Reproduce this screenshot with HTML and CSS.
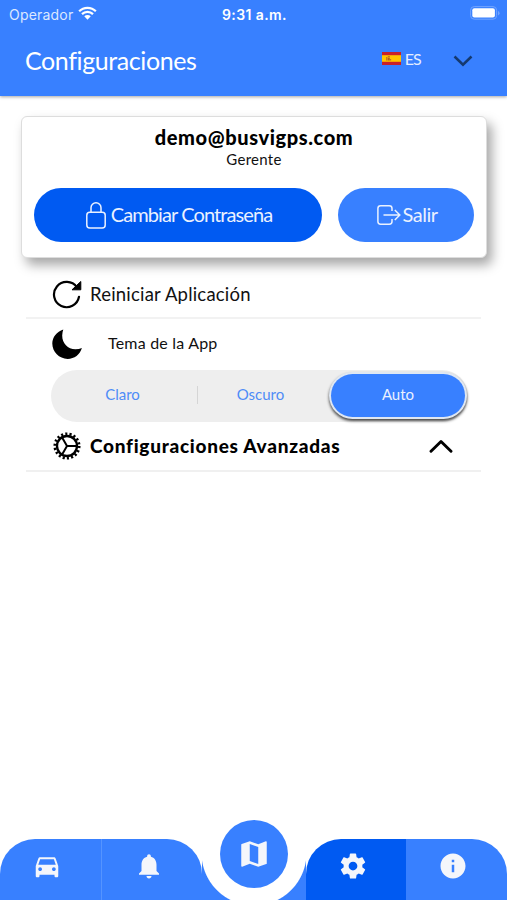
FILE: index.html
```html
<!DOCTYPE html>
<html lang="es">
<head>
    <meta charset="UTF-8">
    <meta name="viewport" content="width=device-width, initial-scale=1.0">
    <title>Configuraciones</title>
    <link rel="stylesheet" href="styles.css">
</head>
<body>
    <div class="app">
        <header class="header">
            <div class="status-bar">
                <div class="carrier">
                    <span>Operador</span>
                    <svg class="wifi" viewBox="0 0 20 14"><path d="M1.2 5.2a12.4 12.4 0 0 1 17.6 0M4.2 8.2a8.2 8.2 0 0 1 11.6 0" fill="none" stroke="#fff" stroke-width="2.3"/><path d="M10 14L6.6 10.5a4.8 4.8 0 0 1 6.8 0z" fill="#fff"/></svg>
                </div>
                <div class="clock">9:31 a.m.</div>
                <div class="battery">
                    <svg viewBox="0 0 30 14"><rect x=".6" y=".6" width="26" height="12.6" rx="3.6" fill="none" stroke="#72a4ff" stroke-width="1"/><rect x="2.3" y="2.3" width="22.6" height="9.2" rx="2" fill="#fff"/><path d="M28 5v4.4q1.6-.6 1.6-2.2T28 5z" fill="#72a4ff"/></svg>
                </div>
            </div>
            <div class="title-bar">
                <h1>Configuraciones</h1>
                <div class="language">
                    <svg class="flag" viewBox="0 0 19 13"><path fill="#c8202a" d="M0 0h19v13H0z"/><path fill="#ffc400" d="M0 3.2h19v6.6H0z"/><path fill="#b25a24" d="M4.3 5h1v3.4h-1zM5.800 4.300h2v1h-2zM5.800 5.800h2v2.600h-2zM8.200 7h.9v1.400h-.9z"/></svg>
                    <span>ES</span>
                    <svg class="chevron-down" viewBox="0 0 20 12"><path d="M1.500 1.500L10 9.700l8.500-8.200" fill="none" stroke="#15396f" stroke-width="2.500"/></svg>
                </div>
            </div>
        </header>

        <main class="content">
            <section class="card">
                <h2>demo@busvigps.com</h2>
                <p>Gerente</p>
                <div class="actions">
                    <button class="btn btn-password">
                        <svg class="lock" viewBox="0 0 20 27" fill="none" stroke="currentColor" stroke-width="1.500"><rect x=".8" y="10.300" width="18.400" height="15.700" rx="3"/><path d="M5 10V5.800a5 5 0 0 1 10 0V10"/></svg>
                        <span>Cambiar Contraseña</span>
                    </button>
                    <button class="btn btn-logout">
                        <svg class="exit" viewBox="0 0 24 20" fill="none" stroke="currentColor" stroke-width="1.500"><path d="M15 6V3.500A2.700 2.700 0 0 0 12.300.8H3.600A2.700 2.700 0 0 0 .9 3.500v13a2.700 2.700 0 0 0 2.700 2.700h8.700a2.700 2.700 0 0 0 2.700-2.700V14M6.500 10h16M17.800 5l5 5-5 5"/></svg>
                        <span>Salir</span>
                    </button>
                </div>
            </section>

            <section class="options">
                <div class="row row-restart">
                    <svg class="icon" viewBox="0 0 30 30"><path d="M24.900 8.300A12.600 12.600 0 1 0 27 17.800" fill="none" stroke="#000" stroke-width="2.200" stroke-linecap="round"/><path d="M28.800 2.500v8.300h-8.800z" fill="#000" stroke="#000" stroke-linejoin="round"/></svg>
                    <span>Reiniciar Aplicación</span>
                </div>
                <div class="row row-theme">
                    <svg class="icon" viewBox="0 0 30 30"><path d="M11.300.5Q10.200 3.400 10.200 6.500C10.200 14.500 15.800 20.200 23.400 20.200Q27 20.200 29.900 19C28 25.500 22.500 29.900 15.600 29.900 7.200 29.900.3 23 .3 14.600.3 8.200 4.800 2.500 11.300.5z"/></svg>
                    <span>Tema de la App</span>
                </div>
                <div class="segmented">
                    <div class="segment">Claro</div>
                    <div class="segment segment-divided">Oscuro</div>
                    <div class="segment segment-active">Auto</div>
                </div>
                <div class="row row-advanced">
                    <svg class="icon" viewBox="0 0 30 30" fill="none" stroke="#000">
                        <circle cx="15" cy="15" r="12.200" stroke-width="2.700" stroke-dasharray="2.130 2.128"/>
                        <circle cx="15" cy="15" r="10" stroke-width="2.300"/>
                        <path d="M24 15h-9l-4.900-8.500M15 15l-4.900 8.500" stroke-width="2"/>
                    </svg>
                    <span>Configuraciones Avanzadas</span>
                    <svg class="chevron-up" viewBox="0 0 24 14"><path d="M2 12.300L12 2.500l10 9.800" fill="none" stroke="#000" stroke-width="2.900" stroke-linecap="round" stroke-linejoin="round"/></svg>
                </div>
            </section>
        </main>

        <nav class="tabs">
            <a class="tab tab-first"><svg viewBox="0 0 24 24"><path d="M18.920 6.010C18.720 5.420 18.160 5 17.500 5h-11c-.66 0-1.210.42-1.420 1.010L3 12v8c0 .55.45 1 1 1h1c.55 0 1-.45 1-1v-1h12v1c0 .55.45 1 1 1h1c.55 0 1-.45 1-1v-8l-2.080-5.990zM6.500 16c-.83 0-1.500-.67-1.500-1.500S5.670 13 6.500 13s1.500.67 1.500 1.500S7.330 16 6.500 16zm11 0c-.83 0-1.500-.67-1.500-1.500s.67-1.500 1.500-1.500 1.500.67 1.500 1.500-.67 1.500-1.500 1.500zM5 11l1.500-4.500h11L19 11H5z"/></svg></a>
            <a class="tab tab-alerts"><svg viewBox="0 0 24 24"><path d="M12 22c1.100 0 2-.9 2-2h-4c0 1.100.89 2 2 2zm6-6v-5c0-3.070-1.640-5.640-4.500-6.320V4c0-.83-.67-1.500-1.500-1.500s-1.500.67-1.500 1.500v.68C7.630 5.360 6 7.920 6 11v5l-2 2v1h16v-1l-2-2z"/></svg></a>
            <a class="tab tab-map"><span class="map-button"><svg viewBox="0 0 24 24"><path d="M20.500 3l-.16.030L15 5.100 9 3 3.360 4.900c-.21.070-.36.250-.36.480V20.500c0 .28.220.5.5.5l.16-.030L9 18.900l6 2.100 5.640-1.900c.21-.070.36-.250.36-.480V3.500c0-.28-.220-.5-.5-.5zM15 19l-6-2.110V5l6 2.110V19z"/></svg></span></a>
            <a class="tab tab-settings"><svg viewBox="0 0 24 24"><path d="M19.430 12.980c.04-.32.07-.64.07-.98s-.03-.66-.07-.98l2.110-1.650c.19-.15.24-.42.12-.64l-2-3.460c-.12-.22-.39-.3-.61-.22l-2.490 1c-.52-.4-1.080-.73-1.690-.98l-.38-2.650C14.460 2.180 14.250 2 14 2h-4c-.25 0-.46.18-.49.42l-.38 2.650c-.61.25-1.170.59-1.690.98l-2.490-1c-.23-.09-.49 0-.61.22l-2 3.460c-.13.22-.07.49.12.64l2.110 1.650c-.04.32-.07.65-.07.98s.03.66.07.98l-2.110 1.650c-.19.15-.24.42-.12.64l2 3.460c.12.22.39.3.61.22l2.490-1c.52.4 1.080.73 1.690.98l.38 2.650c.03.24.24.42.49.42h4c.25 0 .46-.18.49-.42l.38-2.650c.61-.25 1.170-.59 1.690-.98l2.490 1c.23.09.49 0 .61-.22l2-3.460c.12-.22.07-.49-.12-.64l-2.110-1.650zM12 15.500c-1.930 0-3.500-1.570-3.500-3.500s1.570-3.500 3.500-3.500 3.500 1.570 3.500 3.500-1.570 3.500-3.500 3.500z"/></svg></a>
            <a class="tab tab-info"><svg viewBox="0 0 24 24"><path d="M12 2C6.480 2 2 6.480 2 12s4.480 10 10 10 10-4.480 10-10S17.520 2 12 2zm1 15h-2v-6h2v6zm0-8h-2V7h2v2z"/></svg></a>
        </nav>
    </div>
</body>
</html>
```
FILE: styles.css
```css
* {
    box-sizing: border-box;
}
body {
    margin: 0;
    font-family: Futura, Lato, sans-serif;
    background-color: #fff;
    color: #111;
}
h1, h2, p {
    margin: 0;
}
svg {
    display: block;
    flex-shrink: 0;
}
.app {
    display: flex;
    flex-direction: column;
    height: 900px;
    overflow: hidden;
}

/* Header */
.header {
    height: 96px;
    flex-shrink: 0;
    background-color: #3880ff;
    color: #fff;
    box-shadow: 0 1px 3px rgba(0, 0, 0, 0.35);
}
.status-bar {
    display: grid;
    grid-template-columns: 1fr 70px 1fr;
    align-items: center;
    height: 28px;
    padding: 0 7px 0 9px;
    font-family: Inter, sans-serif;
    font-size: 14px;
}
.carrier {
    display: flex;
    align-items: center;
    gap: 5px;
    color: #dce8ff;
}
.carrier span {
    letter-spacing: 0.2px;
}
.wifi {
    width: 19px;
    height: 14px;
    margin-top: -2px;
}
.clock {
    text-align: center;
    font-weight: 600;
    white-space: nowrap;
    letter-spacing: 0.4px;
}
.battery {
    justify-self: end;
    width: 30px;
    margin-top: -2px;
}
.title-bar {
    display: flex;
    justify-content: space-between;
    height: 64px;
    align-items: center;
    padding: 0 34px 0 25px;
}
.title-bar h1 {
    font-size: 25px;
    font-weight: 400;
    letter-spacing: -0.4px;
}
.language {
    display: flex;
    align-items: center;
    font-size: 16px;
    color: #e3edff;
}
.language span {
    margin-top: -4px;
    letter-spacing: -0.8px;
}
.flag {
    width: 19px;
    height: 13px;
    margin: -4px 4px 0 0;
}
.chevron-down {
    width: 20px;
    height: 12px;
    margin: 1px 0 0 32px;
}

/* Account card */
.content {
    flex: 1;
}
.card {
    height: 142px;
    margin: 20px 20px 0 21px;
    padding: 8px 12px 0;
    border: 1px solid #ddd;
    border-radius: 6px;
    background-color: #fff;
    text-align: center;
    box-shadow: 5px 7px 12px rgba(0, 0, 0, 0.35);
}
.card h2 {
    font-size: 20px;
    font-weight: 900;
    line-height: 24px;
    letter-spacing: 0.6px;
    color: #000;
}
.card p {
    font-size: 15px;
    line-height: 20px;
    letter-spacing: 0.3px;
}
.actions {
    display: flex;
    justify-content: space-between;
    margin-top: 19px;
}
.btn {
    display: flex;
    align-items: center;
    justify-content: center;
    height: 54px;
    padding: 0;
    border: 0;
    border-radius: 27px;
    font-family: inherit;
    font-size: 20px;
    color: #eaf1ff;
}
.btn span {
    margin-top: -2px;
}
.btn-password {
    gap: 5px;
    width: 288px;
    padding-left: 2px;
    background-color: #005af2;
    letter-spacing: -0.9px;
}
.btn-logout {
    gap: 2px;
    width: 136px;
    padding-left: 2px;
    background-color: #3880ff;
    letter-spacing: -0.5px;
}
.lock {
    width: 20px;
    height: 27px;
}
.exit {
    width: 24px;
    height: 20px;
}

/* Options list */
.options {
    margin: 12px 26px 0;
}
.row {
    display: flex;
    align-items: center;
    padding-left: 26px;
}
.icon {
    width: 30px;
    height: 30px;
}
.row-restart {
    height: 49px;
    border-bottom: 2px solid #f2f2f2;
    font-size: 18.500px;
    letter-spacing: 0.2px;
}
.row-restart span {
    margin-left: 8px;
}
.row-theme {
    height: 50px;
    font-size: 16px;
    letter-spacing: 0.2px;
}
.row-theme span {
    margin: -4px 0 0 26px;
}
.segmented {
    display: grid;
    grid-template-columns: 143px 133px 1fr;
    align-items: center;
    height: 52px;
    margin: 1px 13px 0 25px;
    padding: 3px 3px 5px 0;
    border-radius: 26px;
    background-color: #eee;
    font-size: 15px;
    color: #4e8cf7;
}
.segment {
    padding-bottom: 3px;
    text-align: center;
}
.segment-divided {
    background: linear-gradient(#d5d5d5, #d5d5d5) 3px center / 1px 18px no-repeat;
}
.segment-active {
    display: flex;
    align-items: center;
    justify-content: center;
    height: 43px;
    margin-left: 4px;
    border-radius: 22px;
    background-color: #3880ff;
    color: #eaf1ff;
    box-shadow: 0 0 0 2px #dfe7f2, 0 2px 3px 2px #444;
}
.row-advanced {
    height: 50px;
    padding-right: 28px;
    border-bottom: 2px solid #f0f0f0;
    font-size: 19px;
    font-weight: 900;
    letter-spacing: 0.73px;
    color: #000;
}
.row-advanced span {
    flex: 1;
    margin: -2px 0 0 8px;
}
.chevron-up {
    width: 24px;
    height: 14px;
}

/* Bottom tabs */
.tabs {
    display: grid;
    grid-template-columns: 101px 101px 104px 100px 101px;
    height: 61px;
}
.tab {
    display: flex;
    justify-content: center;
    padding-top: 12px;
    padding-right: 7px;
    background-color: #3880ff;
}
.tab svg {
    width: 30px;
    height: 30px;
    fill: #f4f6fb;
}
.tab-first {
    border-top-left-radius: 35px;
}
.tab-alerts {
    border-left: 1px solid #5594ff;
    border-top-right-radius: 35px;
}
.tab-map {
    padding: 0;
    background: linear-gradient(#fff, #fff) top / 100% 20px no-repeat, radial-gradient(circle at 52px 14px, #fff 52px, #3880ff 53px);
}
.map-button {
    display: flex;
    align-items: center;
    justify-content: center;
    width: 68px;
    height: 68px;
    margin-top: -19px;
    border-radius: 50%;
    background-color: #3880ff;
}
.map-button svg {
    width: 34px;
    height: 34px;
}
.tab-settings {
    border-top-left-radius: 35px;
    background-color: #005af2;
}
.tab-info {
    border-top-right-radius: 35px;
}
```
